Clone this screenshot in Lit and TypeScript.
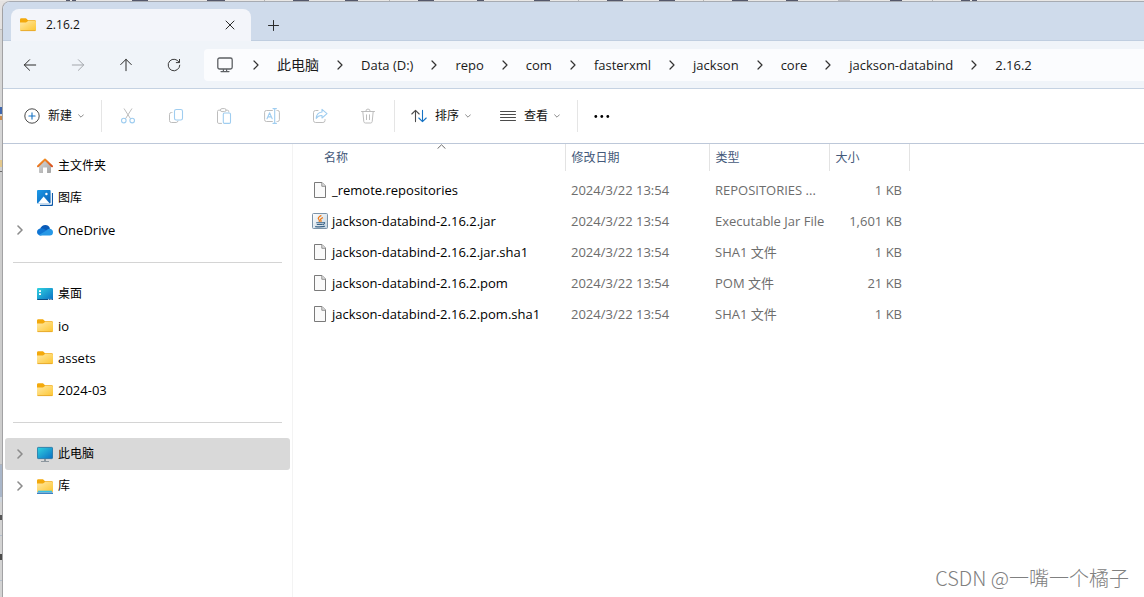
import { LitElement, html, css, svg, nothing } from "lit";
import { customElement, state } from "lit/decorators.js";

const folder = svg`
  <path d="M0 2.6Q0 1.2 1.4 1.2H6L8 3.2H14.8Q16 3.2 16 4.4V7H0Z" fill="#f3a90c"/>
  <path d="M0 5.4H6L8 4H15Q16 4 16 5V13Q16 14 15 14H1Q0 14 0 13Z" fill="url(#fold)"/>
  <path d="M.6 13.6H15.4" stroke="#e5a62a" stroke-width=".9"/>`;

const stroke = (d: string, color = "#2b2b2b", w = 1) =>
  svg`<path d=${d} fill="none" stroke=${color} stroke-width=${w} stroke-linecap="round" stroke-linejoin="round"/>`;

const grey = "#bdbdbd";
const blue = "#9fcdf0";

const glyphs: Record<string, unknown> = {
  folder,
  close: stroke("M4 4L12 12M12 4L4 12"),
  add: stroke("M8.5 3.5V13.5M3.5 8.5H13.5"),
  back: stroke("M13.7 8H2.3M7.6 2.7L2.3 8L7.6 13.3"),
  forward: stroke("M2.3 8H13.7M8.4 2.7L13.7 8L8.4 13.3", "#a3a6ab"),
  up: stroke("M8 13.7V2.3M2.7 7.6L8 2.3L13.3 7.6"),
  refresh: stroke("M13.2 5.4A5.8 5.8 0 1 0 13.8 8.2M13.5 2.4V5.6H10.3", "#3a3a3a"),
  monitor: svg`<rect x=".8" y="1" width="14.4" height="11" rx="1.8" fill="none" stroke="#5c5f63" stroke-width="1.3"/>
    ${stroke("M6.4 12.5V14M9.6 12.5V14M4 14.6H12", "#5c5f63", 1.2)}`,
  fresh: svg`<circle cx="8" cy="8" r="7.2" fill="none" stroke="#4b4b4b"/>${stroke("M8 4.9V11.1M4.9 8H11.1", "#1673c4", 1.1)}`,
  cut: svg`${stroke("M4.2 .8L10.4 10.6M11.8 .8L5.6 10.6", grey)}
    <circle cx="3.8" cy="12.6" r="2.3" fill="none" stroke=${blue} stroke-width="1.1"/>
    <circle cx="12.2" cy="12.6" r="2.3" fill="none" stroke=${blue} stroke-width="1.1"/>`,
  copy: svg`${stroke("M4 4.5H3.4Q1.5 4.5 1.5 6.4V12.6Q1.5 14.5 3.4 14.5H8.2Q9.8 14.5 10 13", grey)}
    <rect x="6.5" y="1.5" width="8" height="10.5" rx="1.8" fill="none" stroke=${blue} stroke-width="1.1"/>`,
  paste: svg`${stroke("M4.5 2.2H2.8Q1.5 2.2 1.5 3.5V14.1Q1.5 15.4 2.8 15.4H5.5M10 2.2H11.4Q12.7 2.2 12.7 3.5V4", grey)}
    <rect x="4.5" y=".6" width="5.5" height="3" rx="1.4" fill="none" stroke=${grey}/>
    <rect x="7.3" y="5" width="7.2" height="10.4" rx="1.2" fill="none" stroke=${blue} stroke-width="1.1"/>`,
  rename: svg`${stroke("M8.4 2.5H2.4Q.6 2.5 .6 4.3V11.7Q.6 13.5 2.4 13.5H8.4M13 2.5H13.6Q15.4 2.5 15.4 4.3V11.7Q15.4 13.5 13.6 13.5H13", grey)}
    ${stroke("M3 10.8L5.6 4.8L8.2 10.8M3.9 8.9H7.3M10.7 .8V15.2M9 .6H12.4M9 15.4H12.4", blue, 1.1)}`,
  share: svg`${stroke("M6 2.5H3.6Q1.5 2.5 1.5 4.6V12.4Q1.5 14.5 3.6 14.5H10.9Q13 14.5 13 12.4V11.5", grey)}
    ${stroke("M10 1.4L15 5.7L10 10V7.5Q6.4 7.2 4.2 10.4Q4.6 4.6 10 4Z", blue, 1.1)}`,
  trash: svg`${stroke("M1.5 3.5H14.5M5.8 3.3Q5.8 1 8 1Q10.2 1 10.2 3.3M2.8 3.5L3.8 13.6Q4 15 5.4 15H10.6Q12 15 12.2 13.6L13.2 3.5M6.5 6.8V11.6M9.5 6.8V11.6", grey)}`,
  sort: svg`${stroke("M4.5 13.6V2.4M.8 6L4.5 2.3L8.2 6", "#4b4b4b", 1.1)}${stroke("M11.5 2.4V13.6M7.8 10L11.5 13.7L15.2 10", "#1673c4", 1.1)}`,
  view: stroke("M.5 3.5H15.5M.5 6.5H15.5M.5 9.5H15.5M.5 12.5H15.5", "#4b4b4b"),
  more: svg`<circle cx="1.8" cy="8.5" r="1.4"/><circle cx="7.8" cy="8.5" r="1.4"/><circle cx="13.8" cy="8.5" r="1.4"/>`,
  home: svg`<path d="M2 7L8 1.8L14 7V14.2Q14 15 13.2 15H10V9.5H6V15H2.8Q2 15 2 14.2Z" fill="url(#wall)"/>
    <path d="M1 8.2L8 1.6L15 8.2" fill="none" stroke="url(#roof)" stroke-width="2" stroke-linecap="round" stroke-linejoin="round"/>`,
  gallery: svg`<path d="M3 15.4H14.2Q15.6 15.4 15.6 14V3" fill="none" stroke="#0f5aa8" stroke-width="1.4"/>
    <rect width="13.6" height="13.6" rx="1" fill="url(#pic)"/>
    <path d="M.8 13.4L6.6 6.6L12.8 13.4Z" fill="#fff"/><circle cx="9.4" cy="4" r="1.2" fill="#fff"/>`,
  cloud: svg`<path d="M3.2 7.2Q4.6 3 8.4 3Q12 3 13 6.6L9.5 9Z" fill="#0a5bb8"/>
    <path d="M3.4 13.4Q0 13 0 10Q.2 6.6 4 6.2Q6.4 6 9 8.2L13 11Z" fill="#0f75d4"/>
    <path d="M2 12.9L9.4 8.4Q10.8 6.3 13 6.7Q16 7.4 16 10.2Q15.9 13.4 12.8 13.4H3.6Q2.7 13.4 2 12.9Z" fill="#2798e6"/>`,
  desktop: svg`<rect y="2" width="16" height="12" rx="1" fill="url(#screen)"/><path d="M.3 13.5H15.7" stroke="#0b4f86"/>
    <path d="M2 4.2H4V6H2ZM2 7.2H4V9H2Z" fill="#fff"/><path d="M11 13.4H15" stroke="#fff" stroke-width=".8" stroke-dasharray="1 .7"/>`,
  pc: svg`<rect x=".4" y="1.4" width="15.2" height="11.2" rx=".8" fill="url(#screen)" stroke="#1b6f9f" stroke-width=".8"/>
    <path d="M7 13H9V15H7Z" fill="#8d979f"/><path d="M4 15.5H12" stroke="#8d979f"/>`,
  library: svg`${folder}<path d="M1 13.5H15" stroke="#36c2e8" stroke-width="1.6"/><path d="M0 15.2H16" stroke="#0b62b5" stroke-width="1.2"/>`,
  file: svg`<path d="M2.5 .5H10L13.5 4V15.5H2.5Z" fill="#fafafa" stroke="#7a7a7a"/><path d="M9.8 .5V4.3H13.5" fill="#ddd" stroke="#8a8a8a" stroke-width=".9"/>`,
  jar: svg`<rect x=".5" y=".5" width="15" height="15" rx="1" fill="url(#jarbg)" stroke="#7b93a8"/>
    <path d="M9.4 2.4Q5 4.6 6.8 6.4Q8 7.6 7 8.8M11 4.6Q7.8 5.8 8.8 7.2Q9.6 8 8.6 9" fill="none" stroke="#ee7d1d" stroke-width="1.3"/>
    <path d="M4.2 9.7H11M11.2 9.5Q14.2 9.4 11 11.7M4.8 11.5H10.6M3.2 13.6Q8 14.2 12.8 13.4" fill="none" stroke="#3b6488" stroke-width="1.1"/>`,
};

const icon = (name: string) => html`<svg class="icon" viewBox="0 0 16 16" aria-hidden="true">${glyphs[name]}</svg>`;
const chevronRight = html`<svg class="chev-r" viewBox="0 0 6 10" aria-hidden="true"><path d="M1 1L5 5L1 9"/></svg>`;
const chevronDown = html`<svg class="chev-d" viewBox="0 0 6 4" aria-hidden="true">${stroke("M.6 .8L3 3.2L5.4 .8", "#8a8a8a")}</svg>`;

interface Crumb { label: string; cjk?: boolean }
const crumbs: Crumb[] = [
  { label: "此电脑", cjk: true }, { label: "Data (D:)" }, { label: "repo" }, { label: "com" }, { label: "fasterxml" },
  { label: "jackson" }, { label: "core" }, { label: "jackson-databind" }, { label: "2.16.2" },
];

const tools = [
  ["cut", "剪切"], ["copy", "复制"], ["paste", "粘贴"], ["rename", "重命名"], ["share", "共享"], ["trash", "删除"],
];

interface Place { id: string; icon: string; label: string; latin?: boolean; open?: boolean }
const places: Place[][] = [
  [
    { id: "home", icon: "home", label: "主文件夹" },
    { id: "gallery", icon: "gallery", label: "图库" },
    { id: "onedrive", icon: "cloud", label: "OneDrive", latin: true, open: true },
  ],
  [
    { id: "desktop", icon: "desktop", label: "桌面" },
    { id: "io", icon: "folder", label: "io", latin: true },
    { id: "assets", icon: "folder", label: "assets", latin: true },
    { id: "2024", icon: "folder", label: "2024-03", latin: true },
  ],
  [
    { id: "pc", icon: "pc", label: "此电脑", open: true },
    { id: "lib", icon: "library", label: "库", open: true },
  ],
];

const files = [
  { icon: "file", name: "_remote.repositories", type: "REPOSITORIES ...", size: "1 KB" },
  { icon: "jar", name: "jackson-databind-2.16.2.jar", type: "Executable Jar File", size: "1,601 KB" },
  { icon: "file", name: "jackson-databind-2.16.2.jar.sha1", type: "SHA1 文件", size: "1 KB" },
  { icon: "file", name: "jackson-databind-2.16.2.pom", type: "POM 文件", size: "21 KB" },
  { icon: "file", name: "jackson-databind-2.16.2.pom.sha1", type: "SHA1 文件", size: "1 KB" },
];

// Slivers of the window behind: [x, width, colour]
const slivers: [number, number, string][] = [
  [66, 4, "#55586a"], [72, 4, "#55586a"], [132, 16, "#55586a"], [207, 18, "#55586a"], [264, 1, "#b5b5b5"],
  [293, 16, "#55586a"], [345, 13, "#55586a"], [389, 1, "#b5b5b5"], [418, 16, "#55586a"], [477, 7, "#55586a"],
  [534, 16, "#55586a"], [578, 1, "#b5b5b5"], [607, 16, "#55586a"], [659, 16, "#55586a"], [703, 1, "#b5b5b5"],
  [732, 16, "#55586a"], [786, 12, "#55586a"], [838, 12, "#b9b9bd"], [890, 12, "#55586a"], [932, 1, "#b5b5b5"],
  [961, 9, "#55586a"], [972, 5, "#55586a"],
];

@customElement("app-root")
export class AppRoot extends LitElement {
  @state() private selected = "pc";

  static styles = css`
    :host {
      display: flex;
      flex-direction: column;
      min-height: 100vh;
      box-sizing: border-box;
      position: relative;
      overflow: hidden;
      background: linear-gradient(
        #e4e2e1 0 29px, #bcbcbc 29px 30px, #d6d6d6 30px 107px, #3f66ad 107px 114px, #d6d6d6 114px 116px,
        #c98a4c 116px 120px, #d6d6d6 120px 160px, #e3c88c 160px 167px, #d0d0d0 167px 171px, #6b6b6b 171px 172px,
        #cdcdcd 172px 464px, #aeb2b8 464px 465px, #a9b6c9 465px 497px, #cdd4dc 497px 502px, #d3d3d3 502px 515px,
        #555 515px 520px, #d3d3d3 520px 535px, #b4bfcc 535px 536px, #d3d3d3 536px 554px, #4a4a4a 554px 560px,
        #d3d3d3 560px 580px, #b4bfcc 580px 581px, #d3d3d3 581px
      );
      color: #1a1a1a;
      font: 13px/18px "Open Sans", "Noto Sans CJK SC", sans-serif;
    }
    button, a { font: inherit; color: inherit; text-decoration: none; }
    button {
      border: 0; padding: 0; background: none; display: flex; align-items: center; justify-content: center;
    }
    .icon { width: 16px; height: 16px; flex: none; display: block; }
    .cjk { font-size: 12px; }
    .behind { display: block; width: 100%; height: 1px; background: #e9e7e5; flex: none; }
    .window {
      flex: 1; display: flex; flex-direction: column; margin-left: 2px;
      border-left: 1px solid #a2a2a4; border-top: 1px solid #a7abb2; border-top-left-radius: 8px;
      background: #fff; overflow: hidden;
    }
    .tabs { display: flex; height: 31px; padding: 7px 0 0 8px; background: #cfdbeb; border-bottom: 1px solid #c0cee0; }
    .tab {
      display: flex; align-items: center; width: 240px; height: 32px; box-sizing: border-box;
      padding: 0 13px 0 9px; background: #f3f5fa; border-radius: 8px 8px 0 0; margin-bottom: -1px;
    }
    .tab-title { flex: 1; margin-left: 10px; font-size: 12px; font-weight: 500; color: #111; }
    .new-tab { margin-left: 14px; width: 16px; }
    .nav {
      display: flex; align-items: center; height: 47px; padding-left: 3px;
      background: #f0f4f9; border-bottom: 1px solid #c5d2e2;
    }
    .nav > button { width: 48px; height: 32px; }
    .address {
      flex: 1; min-width: 0; display: flex; align-items: center; gap: 18px; height: 32px; margin-left: 6px;
      padding-left: 13px; background: #fbfcfe; border-radius: 4px 0 0 4px; white-space: nowrap; overflow: hidden;
    }
    .address > .icon { margin-right: 2px; }
    .crumb-cjk { font-size: 14px; }
    .chev-r { width: 6px; height: 10px; flex: none; fill: none; stroke: #333; stroke-width: 1.2; stroke-linecap: round; stroke-linejoin: round; }
    .chev-d { width: 6px; height: 4px; flex: none; margin-left: 6px; }
    .commands {
      display: flex; align-items: center; height: 54px; padding-left: 5px; border-bottom: 1px solid #bdc8d9; font-size: 12px; color: #111;
    }
    .group { display: flex; gap: 4px; padding: 0 4px; }
    .group button { height: 32px; padding: 0 13px 0 12px; }
    .menu-label { margin-left: 8px; }
    .tools { display: flex; padding: 0 2px; }
    .tools button { width: 48px; height: 32px; }
    .sep { width: 1px; height: 32px; background: #e5e5e5; }
    .body { flex: 1; display: flex; }
    .side { width: 290px; flex: none; box-sizing: border-box; padding: 6px 2px; border-right: 1px solid #f3f3f3; color: #000; }
    .places { list-style: none; margin: 0; padding: 0; }
    .places + .places::before { content: ""; display: block; height: 1px; margin: 16px 8px 15px; background: #d4d4d4; }
    .place {
      width: 100%; height: 32px; padding-left: 12px; justify-content: flex-start; border-radius: 3px;
    }
    .place.selected { background: #d9d9d9; }
    .twist { width: 20px; display: flex; }
    .twist .chev-r { stroke: #8c8c8c; stroke-width: 1.6; }
    .place-label { margin-left: 5px; }
    .list { flex: 1; min-width: 0; }
    table { border-collapse: collapse; table-layout: fixed; width: 616px; }
    .c-name { width: 272px; } .c-date { width: 144px; } .c-type { width: 120px; } .c-size { width: 80px; }
    th, td { padding: 0 1px 0 6px; text-align: left; font-weight: 400; white-space: nowrap; }
    th { height: 27px; border-right: 1px solid #e3e3e3; color: #44597a; font-size: 12px; position: relative; }
    th:first-child { padding-left: 31px; }
    .sorted { position: absolute; left: 144px; top: 0; width: 9px; height: 5px; }
    tbody::before { content: ""; display: block; height: 3px; }
    td { height: 31px; color: #6d6d6d; }
    td:first-child { color: #000; padding-left: 19px; }
    td:last-child { text-align: right; padding-right: 7px; }
    .file { display: flex; align-items: center; gap: 4px; }
    .mark {
      position: absolute; right: 15px; bottom: 5px; font: 300 20px/28px "Noto Sans CJK SC", sans-serif; color: #808080;
    }
  `;

  private place(p: Place) {
    return html`<li>
      <button class="place ${p.id === this.selected ? "selected" : ""}" @click=${() => (this.selected = p.id)}>
        <span class="twist">${p.open ? chevronRight : nothing}</span>
        ${icon(p.icon)}
        <span class="place-label ${p.latin ? "" : "cjk"}">${p.label}</span>
      </button>
    </li>`;
  }

  private gradient(id: string, from: string, to: string) {
    return svg`<linearGradient id=${id} x1="0" y1="0" x2="1" y2="1"><stop stop-color=${from}/><stop offset="1" stop-color=${to}/></linearGradient>`;
  }

  render() {
    return html`
      <svg class="behind" aria-hidden="true">
        <defs>
          ${this.gradient("fold", "#ffe9a6", "#fdc52f")}
          ${this.gradient("wall", "#d9d9d9", "#a3a3a3")}
          ${this.gradient("roof", "#f79a24", "#d9501e")}
          ${this.gradient("pic", "#1c9bea", "#0c5fb4")}
          ${this.gradient("screen", "#2fd3e0", "#0b6fc4")}
          ${this.gradient("jarbg", "#ffffff", "#c3d3e0")}
        </defs>
        ${slivers.map(([x, w, c]) => svg`<rect x=${x} y="0" width=${w} height="1" fill=${c}/>`)}
      </svg>
      <div class="window">
        <header class="tabs">
          <div class="tab">
            ${icon("folder")}<span class="tab-title">2.16.2</span>
            <button aria-label="关闭标签页">${icon("close")}</button>
          </div>
          <button class="new-tab" aria-label="添加新标签页">${icon("add")}</button>
        </header>
        <nav class="nav">
          <button aria-label="后退">${icon("back")}</button>
          <button aria-label="前进" disabled>${icon("forward")}</button>
          <button aria-label="上移">${icon("up")}</button>
          <button aria-label="刷新">${icon("refresh")}</button>
          <div class="address">
            ${icon("monitor")}
            ${crumbs.map((c) => html`${chevronRight}<a href="#" class=${c.cjk ? "crumb-cjk" : ""}>${c.label}</a>`)}
          </div>
        </nav>
        <div class="commands">
          <div class="group"><button>${icon("fresh")}<span class="menu-label">新建</span>${chevronDown}</button></div>
          <span class="sep"></span>
          <div class="tools">
            ${tools.map(([name, label]) => html`<button aria-label=${label} disabled>${icon(name)}</button>`)}
          </div>
          <span class="sep"></span>
          <div class="group">
            <button>${icon("sort")}<span class="menu-label">排序</span>${chevronDown}</button>
            <button>${icon("view")}<span class="menu-label">查看</span>${chevronDown}</button>
          </div>
          <span class="sep"></span>
          <div class="group"><button aria-label="更多">${icon("more")}</button></div>
        </div>
        <div class="body">
          <aside class="side">
            ${places.map((g) => html`<ul class="places">${g.map((p) => this.place(p))}</ul>`)}
          </aside>
          <main class="list">
            <table>
              <colgroup><col class="c-name" /><col class="c-date" /><col class="c-type" /><col class="c-size" /></colgroup>
              <thead>
                <tr>
                  <th scope="col">名称<svg class="sorted" viewBox="0 0 9 5" aria-hidden="true">${stroke("M.8 4.4L4.5 .8L8.2 4.4", "#6b6b6b")}</svg></th>
                  <th scope="col">修改日期</th>
                  <th scope="col">类型</th>
                  <th scope="col">大小</th>
                </tr>
              </thead>
              <tbody>
                ${files.map((f) => html`<tr>
                  <td><span class="file">${icon(f.icon)}<span>${f.name}</span></span></td>
                  <td>2024/3/22 13:54</td>
                  <td>${f.type}</td>
                  <td>${f.size}</td>
                </tr>`)}
              </tbody>
            </table>
          </main>
        </div>
      </div>
      <div class="mark">CSDN @一嘴一个橘子</div>
    `;
  }
}
